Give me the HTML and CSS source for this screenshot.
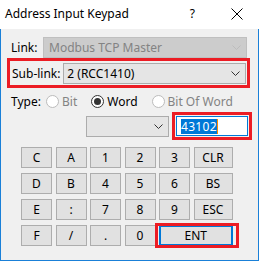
FILE: index.html
```html
<!DOCTYPE html>
<html lang="en">
<head>
    <meta charset="UTF-8">
    <title>Address Input Keypad</title>
    <link rel="stylesheet" href="styles.css">
</head>
<body>
    <div class="window">
        <header class="titlebar">
            <span class="title">Address Input Keypad</span>
            <span class="help">?</span>
            <svg class="close" width="12" height="12" viewBox="0 0 12 12">
                <path d="M0.5 0.5 L11.5 11.5 M11.5 0.5 L0.5 11.5" stroke="#000" stroke-width="1"/>
            </svg>
        </header>

        <div class="content">
            <div class="row link-row">
                <label class="lbl">Link:</label>
                <div class="combo disabled">
                    <span>Modbus TCP Master</span>
                    <svg width="9" height="5" viewBox="0 0 9 5"><path d="M0.5 0.5 L4.5 4.5 L8.5 0.5" fill="none" stroke="#bcbcbc"/></svg>
                </div>
            </div>

            <div class="row sublink-row mark">
                <label class="lbl">Sub-link:</label>
                <div class="combo">
                    <span>2 (RCC1410)</span>
                    <svg width="9" height="5" viewBox="0 0 9 5"><path d="M0.5 0.5 L4.5 4.5 L8.5 0.5" fill="none" stroke="#333"/></svg>
                </div>
            </div>

            <div class="row type-row">
                <label class="lbl">Type:</label>
                <span class="radio off"><i></i>Bit</span>
                <span class="radio on"><i></i>Word</span>
                <span class="radio off"><i></i>Bit Of Word</span>
            </div>

            <div class="row addr-row">
                <div class="combo small">
                    <span></span>
                    <svg width="9" height="5" viewBox="0 0 9 5"><path d="M0.5 0.5 L4.5 4.5 L8.5 0.5" fill="none" stroke="#333"/></svg>
                </div>
                <div class="mark addr-box">
                    <div class="input"><span class="sel">43102</span><span class="caret"></span></div>
                </div>
            </div>

            <div class="keypad">
                <button class="key">C</button>
                <button class="key">A</button>
                <button class="key">1</button>
                <button class="key">2</button>
                <button class="key">3</button>
                <button class="key">CLR</button>
                <button class="key">D</button>
                <button class="key">B</button>
                <button class="key">4</button>
                <button class="key">5</button>
                <button class="key">6</button>
                <button class="key">BS</button>
                <button class="key">E</button>
                <button class="key">:</button>
                <button class="key">7</button>
                <button class="key">8</button>
                <button class="key">9</button>
                <button class="key">ESC</button>
                <button class="key">F</button>
                <button class="key">/</button>
                <button class="key">.</button>
                <button class="key">0</button>
                <button class="key ent">ENT</button>
            </div>
        </div>
    </div>
</body>
</html>
```

FILE: styles.css
```css
*{
    box-sizing: border-box;
}

body{
    margin: 0;
    font-family: "Noto Sans", "Open Sans", sans-serif;
    font-size: 12px;
    color: #000;
}

.window{
    width: 259px;
    height: 261px;
    display: flex;
    flex-direction: column;
}

.titlebar{
    height: 29px;
    background: #fff;
    display: flex;
    align-items: center;
    padding-left: 5px;
}

.title{
    flex: 1;
    font-size: 12px;
    margin-top: -2px;
}

.help{
    font-size: 12px;
    margin-right: 36px;
    margin-top: -2px;
}

.close{
    margin-right: 16px;
    margin-top: -2px;
}

.content{
    flex: 1;
    background: #f0f0f0;
    border: 1px solid #1a80d8;
    border-top: none;
    padding: 8px 0 0 6px;
}

.row{
    display: flex;
    align-items: center;
}

.lbl{
    width: 54px;
    padding-left: 4px;
}

.combo{
    width: 185px;
    height: 21px;
    border: 1px solid #acacac;
    background: #e5e5e5;
    display: flex;
    align-items: center;
    justify-content: space-between;
    padding: 0 5px 0 3px;
}

.combo.disabled{
    width: 204px;
    background: #cccccc;
    border-color: #bfbfbf;
    color: #838383;
    padding-left: 5px;
}

.link-row .lbl{
    width: 36px;
}

.mark{
    border: 3px solid #ec1c24;
}

.sublink-row{
    width: 243px;
    padding: 2px 1px 1px 1px;
}

.sublink-row .lbl{
    width: 53px;
    padding-left: 1px;
}

.type-row{
    margin-top: 5px;
    height: 16px;
}

.type-row .lbl{
    width: 39px;
}

.radio{
    display: flex;
    align-items: center;
    margin-right: 14px;
}

.radio i{
    width: 13px;
    height: 13px;
    border-radius: 50%;
    border: 1px solid #333;
    background: #fff;
    margin-right: 3px;
    display: flex;
    align-items: center;
    justify-content: center;
}

.radio.off{
    color: #838383;
}

.radio.off i{
    border-color: #bcbcbc;
}

.radio.on i::after{
    content: "";
    width: 7px;
    height: 7px;
    border-radius: 50%;
    background: #333;
}

.addr-row{
    margin-top: 3px;
    padding-left: 79px;
}

.combo.small{
    width: 83px;
    margin-right: 3px;
}

.addr-box{
    width: 80px;
    height: 28px;
    padding: 1px;
}

.input{
    height: 100%;
    background: #fff;
    border: 1px solid #0078d7;
    display: flex;
    align-items: center;
    padding-left: 4px;
}

.sel{
    background: #0078d7;
    color: #fff;
    line-height: 15px;
    letter-spacing: 0.3px;
}

.caret{
    width: 1px;
    height: 15px;
    background: #ff8c00;
}

.keypad{
    display: grid;
    grid-template-columns: repeat(5, 31px) 39px;
    grid-auto-rows: 21px;
    column-gap: 3.5px;
    row-gap: 5px;
    margin: 7px 0 0 14px;
}

.key{
    font-family: "Noto Sans", "Open Sans", sans-serif;
    font-size: 12px;
    background: #e1e1e1;
    border: 1px solid #adadad;
    padding: 0;
    color: #000;
}

.ent{
    grid-column: span 2;
    border: 2px solid #0078d7;
    position: relative;
}

.ent::after{
    content: "";
    position: absolute;
    left: -6px;
    right: -8px;
    top: -4px;
    bottom: -4px;
    border: 3px solid #ec1c24;
}
```
